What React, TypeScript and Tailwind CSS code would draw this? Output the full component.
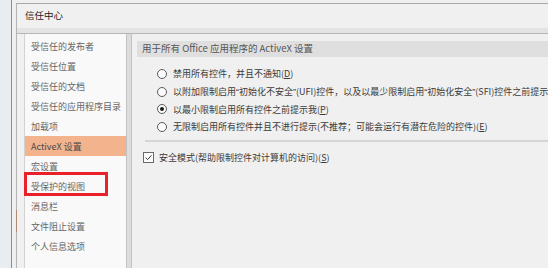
const font = "font-['Microsoft_YaHei','Noto_Sans_CJK_SC',sans-serif]";

const listItems = [
  "受信任的发布者",
  "受信任位置",
  "受信任的文档",
  "受信任的应用程序目录",
  "加载项",
  "ActiveX 设置",
  "宏设置",
  "受保护的视图",
  "消息栏",
  "文件阻止设置",
  "个人信息选项",
];

const Radio = ({ checked, children }: { checked?: boolean; children: React.ReactNode }) => (
  <div className="flex h-[17.7px] items-center whitespace-nowrap">
    <span className="flex h-[10px] w-[10px] shrink-0 items-center justify-center rounded-full border border-[#5a5a5a] bg-[#fbfbfb]">
      {checked && <span className="h-[4px] w-[4px] rounded-full bg-[#1a1a1a]" />}
    </span>
    <span className="ml-[6px]">{children}</span>
  </div>
);

const U = ({ children }: { children: React.ReactNode }) => <span className="underline underline-offset-1">{children}</span>;

// narrow quote marks, as the original font draws them
const Q = ({ children }: { children: React.ReactNode }) => (
  <span className="font-['Liberation_Sans',sans-serif]">{children}</span>
);

const App = () => {
  return (
    <div className={`relative flex h-[268px] w-[548px] overflow-hidden bg-[#e9edf2] text-[9px] leading-none text-[#333] ${font}`}>
      <div className="w-[11px] shrink-0" />
      <div className="mr-[2px] flex flex-1 border-l border-[#8f8f8f] bg-[#efefef] pl-[4px] pt-[3px]">
        <div className="flex w-[1px] shrink-0 flex-col bg-[#b4b4b4]">
          <div className="h-[207px]" />
          <div className="h-[22px] bg-[#b08a74]" />
        </div>
        <div className="flex flex-1 flex-col border-t border-[#a9a9a9] bg-[#f0f0f0]">
          <div className="flex h-[24px] items-center pl-[8px] text-[9.5px] text-[#222]">信任中心</div>
          <div className="h-[6px] border-b border-[#b6b6b6] bg-[#e3e3e3]" />

          <div className="flex flex-1">
            <div className="w-[7px] shrink-0" />
            <div className="w-[102px] shrink-0 border-l border-[#d2d2d2] bg-[#f9f9f9] pt-[2px] text-[#666]">
              {listItems.map((item) => (
                <div
                  key={item}
                  className={`flex h-[20px] items-center whitespace-nowrap pl-[6px] ${item === "ActiveX 设置" ? "bg-[#f2b38d] text-[#4a4a4a]" : ""}`}
                >
                  {item}
                </div>
              ))}
            </div>
            <div className="w-[6px] shrink-0 border-x border-[#c3c3c3] bg-[#dcdcdc]" />

            <div className="flex flex-1 flex-col overflow-hidden pl-[5px] pt-[7px] text-[#3a3a3a]">
              <div className="flex h-[16px] items-center whitespace-nowrap bg-[#dfdfdf] pl-[5px] text-[9.5px] text-[#555]">
                用于所有 Office 应用程序的 ActiveX 设置
              </div>

              <div className="mt-[8px] pl-[20px]">
                <Radio>
                  禁用所有控件，并且不通知(<U>D</U>)
                </Radio>
                <Radio>
                  以附加限制启用<Q>“</Q>初始化不安全<Q>”</Q>(UFI)控件，以及以最少限制启用<Q>“</Q>初始化安全<Q>”</Q>(SFI)控件之前提示我(<U>N</U>)
                </Radio>
                <Radio checked>
                  以最小限制启用所有控件之前提示我(<U>P</U>)
                </Radio>
                <Radio>
                  无限制启用所有控件并且不进行提示(不推荐；可能会运行有潜在危险的控件)(<U>E</U>)
                </Radio>
              </div>

              <div className="ml-[8px] mt-[4px] h-[2px] bg-[#d5d5d5]" />

              <div className="ml-[6px] mt-[10px] flex h-[12px] items-center whitespace-nowrap">
                <span className="flex h-[11px] w-[11px] shrink-0 items-center justify-center border border-[#6a6a6a] bg-[#fbfbfb]">
                  <svg viewBox="0 0 10 10" className="h-[9px] w-[9px]">
                    <path d="M1.8 5.2 L4 7.3 L8.3 2.6" fill="none" stroke="#333" strokeWidth="1.1" />
                  </svg>
                </span>
                <span className="ml-[5px]">
                  安全模式(帮助限制控件对计算机的访问)(<U>S</U>)
                </span>
              </div>
            </div>
          </div>
        </div>
      </div>

      <div className="absolute left-[24px] top-[172px] h-[24px] w-[84px] border-[3px] border-[#e8212b]" />
    </div>
  );
};

export default App;
